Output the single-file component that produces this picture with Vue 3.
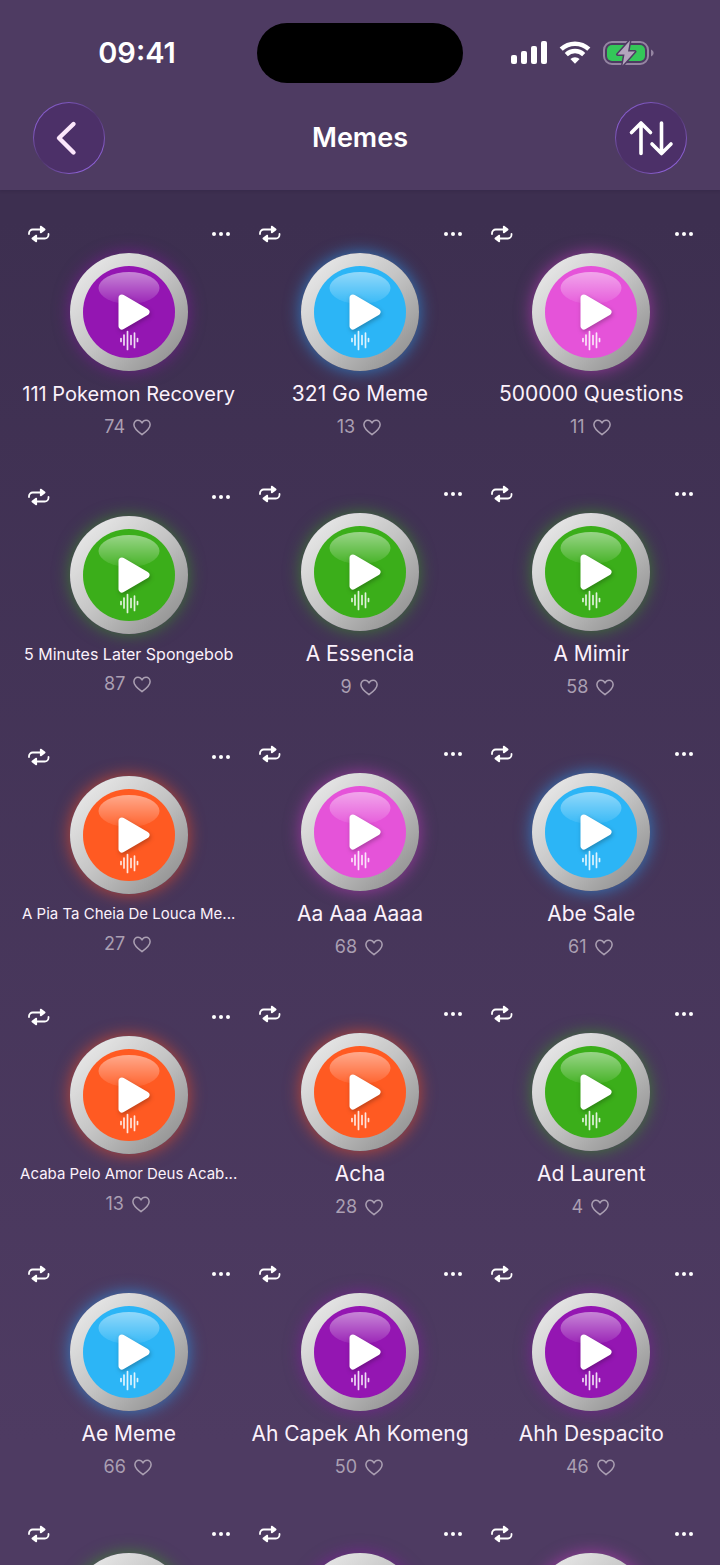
<template>
    <div class="screen">
        <header class="header">
            <div class="status-bar">
                <time class="clock">09:41</time>
                <div class="island"></div>
                <div class="status-icons">
                    <svg class="signal" viewBox="0 0 36 24" aria-hidden="true">
                        <rect x="0" y="14" width="6" height="9" rx="2" />
                        <rect x="10" y="10" width="6" height="13" rx="2" />
                        <rect x="20" y="5" width="6" height="18" rx="2" />
                        <rect x="30" y="0" width="6" height="23" rx="2" />
                    </svg>
                    <svg class="wifi" viewBox="0 0 32 24" aria-hidden="true">
                        <path d="M2.2 8.2a20 20 0 0 1 27.6 0" />
                        <path d="M7.3 13.6a12.6 12.6 0 0 1 17.4 0" />
                        <path class="dot" d="M16 22.7l-4.6-4.6a6.6 6.6 0 0 1 9.2 0z" />
                    </svg>
                    <svg class="battery" viewBox="0 0 52 26" aria-hidden="true">
                        <rect class="shell" x="1" y="2" width="44" height="22" rx="8" />
                        <rect class="level" x="4" y="5" width="38" height="16" rx="5" />
                        <path class="tip" d="M48 9.500c3.500 1.500 3.500 5.500 0 7z" />
                        <path class="bolt" d="M27 .5L14.500 14.500h7L19.500 25.500 32 11.500h-7z" />
                    </svg>
                </div>
            </div>
            <nav class="nav-bar">
                <button class="round-btn" aria-label="Back">
                    <svg viewBox="0 0 70 70">
                        <path class="chevron" d="M39.500 21L25 35l14.500 14.500" />
                    </svg>
                </button>
                <h1>Memes</h1>
                <button class="round-btn" aria-label="Sort">
                    <svg viewBox="0 0 70 70">
                        <path class="arrows" d="M25 50.500V20M15.500 29.500L25 20l9.500 9.500M45.500 20v30.500M36 41l9.500 9.500L55 41" />
                    </svg>
                </button>
            </nav>
        </header>

        <main class="grid">
            <article v-for="(sound, index) in sounds" :key="index" class="card">
                <div class="card-top">
                    <button class="icon-btn" aria-label="Loop">
                        <svg class="loop" viewBox="0 0 22 18">
                            <path class="line" d="M1 9V8.200a3.700 3.700 0 0 1 3.700-3.700H13M20.500 9v.8a3.700 3.700 0 0 1-3.700 3.700H8.500" />
                            <path class="head" d="M12.700 1.500v6l4-3zM8.300 10.500v6l-4-3z" />
                        </svg>
                    </button>
                    <button class="icon-btn" aria-label="More">
                        <svg class="more" viewBox="0 0 20 6">
                            <circle cx="3" cy="3" r="2" />
                            <circle cx="10" cy="3" r="2" />
                            <circle cx="17" cy="3" r="2" />
                        </svg>
                    </button>
                </div>
                <button class="play" :class="sound.color" :aria-label="'Play ' + sound.title">
                    <span class="face">
                        <svg viewBox="0 0 92 92">
                            <defs>
                                <linearGradient id="gloss" x1="0" y1="0" x2="0" y2="1">
                                    <stop offset="0" stop-color="#fff" stop-opacity=".48" />
                                    <stop offset="1" stop-color="#fff" stop-opacity=".06" />
                                </linearGradient>
                            </defs>
                            <ellipse cx="46" cy="22" rx="30.500" ry="16" fill="url(#gloss)" />
                            <path class="triangle" d="M39 32L63 46 39 60z" />
                            <path class="wave" d="M38 72.500v3M41 69v10M44.500 65.500v18M48 69.500v9M51.500 67v14.500M54.500 72.500v3" />
                        </svg>
                    </span>
                </button>
                <h2 :class="sound.size">{{ sound.title }}</h2>
                <div class="likes">
                    <span>{{ sound.likes }}</span>
                    <svg viewBox="0 0 20 18" aria-hidden="true">
                        <path d="M10 17C6 14 1 10.200 1 5.900 1 3 3 1 5.500 1c2 0 3.500 1.100 4.500 3 1-1.900 2.500-3 4.500-3C17 1 19 3 19 5.900 19 10.200 14 14 10 17z" />
                    </svg>
                </div>
            </article>
        </main>
    </div>
</template>

<script setup>
import { ref } from 'vue'

// long titles get a smaller size so they fit on one line
const sounds = ref([
    { title: '111 Pokemon Recovery', likes: 74, color: 'purple', size: 'medium' },
    { title: '321 Go Meme', likes: 13, color: 'blue' },
    { title: '500000 Questions', likes: 11, color: 'pink' },
    { title: '5 Minutes Later Spongebob', likes: 87, color: 'green', size: 'small' },
    { title: 'A Essencia', likes: 9, color: 'green' },
    { title: 'A Mimir', likes: 58, color: 'green' },
    { title: 'A Pia Ta Cheia De Louca Me...', likes: 27, color: 'orange', size: 'tiny' },
    { title: 'Aa Aaa Aaaa', likes: 68, color: 'pink' },
    { title: 'Abe Sale', likes: 61, color: 'blue' },
    { title: 'Acaba Pelo Amor Deus Acab...', likes: 13, color: 'orange', size: 'tiny' },
    { title: 'Acha', likes: 28, color: 'orange' },
    { title: 'Ad Laurent', likes: 4, color: 'green' },
    { title: 'Ae Meme', likes: 66, color: 'blue' },
    { title: 'Ah Capek Ah Komeng', likes: 50, color: 'purple' },
    { title: 'Ahh Despacito', likes: 46, color: 'purple' },
    { title: '', likes: '', color: 'green' },
    { title: '', likes: '', color: 'purple' },
    { title: '', likes: '', color: 'pink' }
])
</script>

<style>
body {
    background: #4e3b62;
}
</style>

<style scoped>
.screen {
    height: 100vh;
    overflow: hidden;
    display: flex;
    flex-direction: column;
    background: linear-gradient(#3d2f50 14%, #4e3b62 92%);
    color: #fff;
    font-family: Inter, "Liberation Sans", sans-serif;
}

button {
    border: none;
    padding: 0;
    background: none;
    color: inherit;
    cursor: pointer;
}

svg {
    display: block;
}

.header {
    flex: none;
    background: #4e3b62;
    box-shadow: 0 1px 3px rgba(40, 25, 60, .3);
    padding: 23px 33px 16px;
}

.status-bar {
    display: grid;
    grid-template-columns: 1fr 206px 1fr;
    align-items: center;
}

.clock {
    justify-self: center;
    font-size: 29px;
    line-height: 32px;
    font-weight: 600;
    margin-right: 16px;
}

.island {
    height: 60px;
    border-radius: 30px;
    background: #000;
}

.status-icons {
    display: flex;
    align-items: center;
    justify-self: center;
    gap: 12px;
    margin-left: 16px;
    fill: #fff;
}

.signal {
    width: 36px;
    height: 24px;
}

.wifi {
    width: 32px;
    height: 24px;
}

.wifi path {
    fill: none;
    stroke: #fff;
    stroke-width: 4.5;
}

.wifi .dot {
    fill: #fff;
    stroke: none;
}

.battery {
    width: 52px;
    height: 26px;
}

.shell {
    fill: none;
    stroke: #9585a2;
    stroke-width: 2;
}

.level {
    fill: #34c759;
}

.tip {
    fill: #9585a2;
}

.bolt {
    fill: #b3a5bd;
    stroke: #4e3b62;
    stroke-width: 3;
    stroke-linejoin: round;
    paint-order: stroke;
}

.nav-bar {
    display: flex;
    align-items: center;
    justify-content: space-between;
    margin-top: 19px;
}

.nav-bar h1 {
    margin: 0;
    font-size: 27px;
    line-height: 32px;
    font-weight: 600;
}

.round-btn {
    width: 72px;
    height: 72px;
    border: 1px solid transparent;
    border-radius: 50%;
    background: linear-gradient(#4c3068, #4c3068) padding-box, conic-gradient(#7c56bc, #50376c 50deg, #8c60d4 110deg, #8c60d4 170deg, #50376c 230deg, #8c60d4 290deg, #7c56bc) border-box;
}

.round-btn path {
    fill: none;
    stroke: #fff;
    stroke-width: 3.6;
    stroke-linecap: round;
    stroke-linejoin: round;
}

.round-btn .chevron {
    stroke: #fbe6fb;
    stroke-width: 4.4;
}

.grid {
    display: grid;
    grid-template-columns: repeat(3, minmax(0, 1fr));
    grid-auto-rows: 260px;
    column-gap: 14px;
    align-items: center;
    padding: 11px 20px 0;
}

.card {
    display: flex;
    flex-direction: column;
    align-items: center;
}

.card-top {
    align-self: stretch;
    display: flex;
    align-items: center;
    justify-content: space-between;
    height: 22px;
    padding: 0 6px 0 8px;
    fill: #fff;
}

.loop {
    width: 22px;
    height: 18px;
}

.loop .line {
    fill: none;
    stroke: #fff;
    stroke-width: 1.8;
    stroke-linecap: round;
}

.loop .head {
    stroke: #fff;
    stroke-width: 1.6;
    stroke-linejoin: round;
}

.more {
    width: 20px;
    height: 6px;
}

.play {
    display: flex;
    align-items: center;
    justify-content: center;
    width: 118px;
    height: 118px;
    margin-top: 8px;
    border-radius: 50%;
    background: linear-gradient(135deg, #e8e8e8 10%, #c4c4c4 50%, #8c8c8c 95%);
    box-shadow: 0 0 16px 1px var(--glow);
}

.face {
    width: 92px;
    height: 92px;
    border-radius: 50%;
    background: var(--face);
}

.purple {
    --face: #9416b2;
    --glow: rgba(148, 22, 178, .5);
}

.blue {
    --face: #2cb5f6;
    --glow: rgba(44, 160, 246, .6);
}

.pink {
    --face: #e553d9;
    --glow: rgba(205, 60, 200, .55);
}

.green {
    --face: #3bae1a;
    --glow: rgba(59, 174, 26, .5);
}

.orange {
    --face: #ff5a22;
    --glow: rgba(255, 80, 34, .6);
}

.triangle {
    fill: #fff;
    stroke: #fff;
    stroke-width: 7;
    stroke-linejoin: round;
    filter: drop-shadow(1px 2px 2px rgba(0, 0, 0, .25));
}

.wave {
    fill: none;
    stroke: #fff;
    stroke-opacity: .85;
    stroke-width: 1.7;
    stroke-linecap: round;
}

.card h2 {
    margin: 10px 0 0;
    height: 26px;
    font-size: 21px;
    line-height: 26px;
    font-weight: 400;
    color: #fbf1fb;
    white-space: nowrap;
}

.card h2.medium {
    font-size: 20px;
}

.card h2.small,
.card h2.tiny {
    height: 20px;
    font-size: 16px;
    line-height: 20px;
}

.card h2.tiny {
    font-size: 15px;
}

.likes {
    display: flex;
    align-items: center;
    gap: 8px;
    height: 24px;
    margin-top: 8px;
    padding-right: 2px;
    font-size: 18px;
    line-height: 24px;
    color: #aa9fb2;
}

.likes svg {
    width: 18px;
    height: 17px;
}

.likes path {
    fill: none;
    stroke: #aa9fb2;
    stroke-width: 1.7;
    stroke-linejoin: round;
}
</style>
